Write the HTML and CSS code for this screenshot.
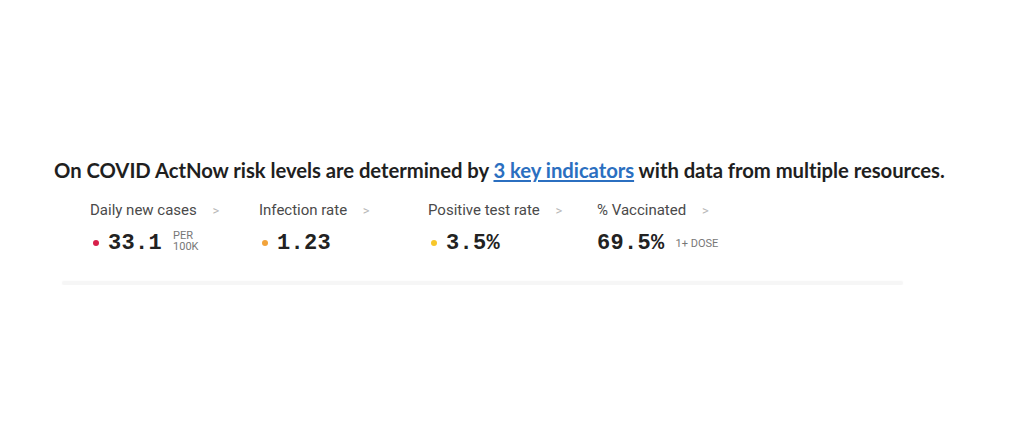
FILE: index.html
```html
<!DOCTYPE html>
<html>
<head>
<meta charset="utf-8">
<link rel="stylesheet" href="styles.css">
</head>
<body>
<main class="page">
  <h2 class="headline">On COVID ActNow risk levels are determined by <a href="#" class="link">3 key indicators</a> with data from multiple resources.</h2>
  <section class="indicators">
    <div class="metric">
      <div class="label">Daily new cases <span class="chev">&gt;</span></div>
      <div class="value"><span class="dot red"></span><span class="num">33.1</span><span class="unit stack"><span>PER</span><span>100K</span></span></div>
    </div>
    <div class="metric">
      <div class="label">Infection rate <span class="chev">&gt;</span></div>
      <div class="value"><span class="dot orange"></span><span class="num">1.23</span></div>
    </div>
    <div class="metric">
      <div class="label">Positive test rate <span class="chev">&gt;</span></div>
      <div class="value"><span class="dot yellow"></span><span class="num">3.5%</span></div>
    </div>
    <div class="metric">
      <div class="label">% Vaccinated <span class="chev">&gt;</span></div>
      <div class="value"><span class="num">69.5%</span><span class="unit">1+ DOSE</span></div>
    </div>
  </section>
  <div class="divider"></div>
</main>
</body>
</html>
```
FILE: styles.css
```css
html, body {
  margin: 0;
  padding: 0;
  background: #fff;
}
.page {
  padding: 155px 0 0 54px;
  width: 1000px;
}
.headline {
  margin: 0;
  font-family: Lato, "Open Sans", sans-serif;
  font-weight: 700;
  font-size: 20.3px;
  line-height: 30px;
  color: #1f1f1f;
  letter-spacing: -0.05px;
}
.link {
  color: #2b6fc0;
  text-decoration: underline;
}
.indicators {
  display: flex;
  padding: 15px 0 0 36px;
}
.metric {
  width: 169px;
  display: flex;
  flex-direction: column;
  gap: 9px;
}
.label {
  font-family: Roboto, sans-serif;
  font-size: 15px;
  color: #4a4a4a;
  line-height: 20px;
}
.chev {
  color: #b8b8b8;
  margin-left: 12px;
  font-size: 13px;
}
.value {
  display: flex;
  align-items: center;
  height: 26px;
}
.dot {
  width: 6px;
  height: 6px;
  border-radius: 50%;
  margin: 0 9px 0 3px;
}
.red { background: #d7204a; }
.orange { background: #f2a33a; }
.yellow { background: #f7c72a; }
.num {
  font-family: "Liberation Mono", "DejaVu Sans Mono", monospace;
  font-weight: 700;
  font-size: 22px;
  color: #222;
  letter-spacing: 0.3px;
}
.unit {
  font-family: Roboto, sans-serif;
  font-size: 11px;
  color: #777;
  margin-left: 11px;
}
.stack {
  display: flex;
  flex-direction: column;
  line-height: 11px;
  margin-top: -4px;
}
.divider {
  margin: 25px 0 0 8px;
  width: 841px;
  height: 4px;
  background: #f6f6f6;
  border-radius: 2px;
  box-shadow: 0 0 2px rgba(0,0,0,0.04);
}
```
